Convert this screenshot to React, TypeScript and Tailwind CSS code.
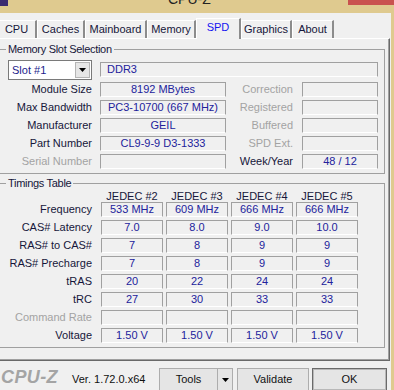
import React from 'react'

const memRows = [
  { label: 'Module Size', value: '8192 MBytes', right: 'Correction', rightValue: '', rightOff: true },
  { label: 'Max Bandwidth', value: 'PC3-10700 (667 MHz)', right: 'Registered', rightValue: '', rightOff: true },
  { label: 'Manufacturer', value: 'GEIL', right: 'Buffered', rightValue: '', rightOff: true },
  { label: 'Part Number', value: 'CL9-9-9 D3-1333', right: 'SPD Ext.', rightValue: '', rightOff: true },
  { label: 'Serial Number', value: '', off: true, right: 'Week/Year', rightValue: '48 / 12', rightOff: false },
]

const timings = [
  { label: 'Frequency', values: ['533 MHz', '609 MHz', '666 MHz', '666 MHz'] },
  { label: 'CAS# Latency', values: ['7.0', '8.0', '9.0', '10.0'] },
  { label: 'RAS# to CAS#', values: ['7', '8', '9', '9'] },
  { label: 'RAS# Precharge', values: ['7', '8', '9', '9'] },
  { label: 'tRAS', values: ['20', '22', '24', '24'] },
  { label: 'tRC', values: ['27', '30', '33', '33'] },
  { label: 'Command Rate', values: ['', '', '', ''], off: true },
  { label: 'Voltage', values: ['1.50 V', '1.50 V', '1.50 V', '1.50 V'] },
]

const tabs = [
  { name: 'CPU', w: 'w-[40px]' },
  { name: 'Caches', w: 'w-[48px]' },
  { name: 'Mainboard', w: 'w-[62px]' },
  { name: 'Memory', w: 'w-[49px]' },
  { name: 'SPD', w: 'w-[45px]', active: true },
  { name: 'Graphics', w: 'w-[51px]' },
  { name: 'About', w: 'w-[42px]' },
]

function Box({ children, className = '' }: { children?: React.ReactNode; className?: string }) {
  return (
    <div
      className={`h-[15px] border border-[#a0a0a0] border-b-white text-center leading-[13px] text-[#22229c] whitespace-nowrap overflow-hidden ${className}`}
    >
      {children}
    </div>
  )
}

function Arrow() {
  return (
    <svg width="7" height="4" viewBox="0 0 7 4">
      <polygon points="0,0 7,0 3.5,4" fill="#000" />
    </svg>
  )
}

export default function App() {
  return (
    <div className="w-[394px] h-[390px] overflow-hidden bg-[#dfca8f] flex flex-col font-['Liberation_Sans',Arial,sans-serif] text-[11px] text-[#16163a]">
      {/* title bar */}
      <div className="h-[13px] shrink-0 flex items-start">
        <div className="w-[8px] h-[6px] bg-[#3b2a70]" />
        <div className="ml-[160px] -mt-[8px] text-[14px] leading-[14px] text-[#222]">CPU-Z</div>
        <div className="ml-auto w-[46px] h-[5px] bg-[#c9524f]" />
      </div>

      <div className="flex-1 w-[391px] bg-[#f0f0f0] flex flex-col">
        {/* tabs */}
        <div className="h-[25px] shrink-0 flex items-end -ml-[3px]">
          {tabs.map((t) =>
            t.active ? (
              <div
                key={t.name}
                className={`${t.w} h-[21px] -mb-[1px] relative z-10 bg-[#f0f0f0] border-t border-l border-white border-r-2 border-r-[#8c8c8c] flex items-center justify-center pb-[3px] text-[#1414f0]`}
              >
                {t.name}
              </div>
            ) : (
              <div
                key={t.name}
                className={`${t.w} h-[18px] border-t border-l border-white border-r-2 border-r-[#8c8c8c] flex items-center justify-center text-[#16163a]`}
              >
                {t.name}
              </div>
            )
          )}
        </div>

        {/* panel */}
        <div className="w-[393px] -ml-[3px] h-[323px] shrink-0 border-t border-l border-white border-r border-b border-r-[#696969] border-b-[#696969] shadow-[inset_-1px_-1px_0_#a0a0a0] flex flex-col">
          <fieldset className="ml-[1px] mr-[4px] mt-[4px] border border-[#a0a0a0] pt-[4px] pb-[4px]">
            <legend className="ml-[6px] px-[2px] leading-[13px] tracking-[-0.3px]">Memory Slot Selection</legend>
            <div className="flex h-[20px]">
              <div className="ml-[8px] w-[84px] h-[20px] bg-white border border-[#7a7a7a] flex items-center">
                <span className="pl-[3px] flex-1 text-[#1c1c8c]">Slot #1</span>
                <div className="w-[15px] h-[16px] mr-[1px] bg-[#e6e6e6] border border-[#b5b5b5] flex items-center justify-center">
                  <Arrow />
                </div>
              </div>
              <Box className="ml-[8px] w-[278px] mt-[2px] !text-left pl-[6px]">DDR3</Box>
            </div>
            <div className="flex flex-col gap-[3px] mt-[2px]">
              {memRows.map((r) => (
                <div key={r.label} className="flex h-[15px] leading-[15px]">
                  <div className={`w-[92px] text-right ${r.off ? 'text-[#a3a3a3]' : ''}`}>{r.label}</div>
                  <Box className="ml-[8px] w-[126px]">{r.value}</Box>
                  <div className={`w-[67px] text-right ${r.rightOff ? 'text-[#a3a3a3]' : ''}`}>{r.right}</div>
                  <Box className="ml-[9px] w-[76px]">{r.rightValue}</Box>
                </div>
              ))}
            </div>
          </fieldset>

          <fieldset className="ml-[1px] mr-[4px] mt-[3px] border border-[#a0a0a0] pb-[4px]">
            <legend className="ml-[6px] px-[2px] leading-[13px] tracking-[-0.3px]">Timings Table</legend>
            <div className="flex h-[12px] leading-[12px]">
              <div className="w-[92px]" />
              <div className="ml-[9px] flex gap-[3px]">
                {['JEDEC #2', 'JEDEC #3', 'JEDEC #4', 'JEDEC #5'].map((h) => (
                  <div key={h} className="w-[62px] text-center">{h}</div>
                ))}
              </div>
            </div>
            <div className="flex flex-col gap-[3px]">
              {timings.map((r) => (
                <div key={r.label} className="flex h-[15px] leading-[15px]">
                  <div className={`w-[92px] text-right ${r.off ? 'text-[#a3a3a3]' : ''}`}>{r.label}</div>
                  <div className="ml-[9px] flex gap-[3px]">
                    {r.values.map((v, i) => (
                      <Box key={i} className="w-[62px]">{v}</Box>
                    ))}
                  </div>
                </div>
              ))}
            </div>
          </fieldset>
        </div>

        {/* bottom bar */}
        <div className="flex items-start">
          <div className="w-[72px] pl-[1px] mt-[7px] text-[18px] leading-[19px] font-bold italic text-[#a4a4a4] tracking-[0.4px]">CPU-Z</div>
          <div className="w-[87px] mt-[12px] leading-[13px] text-[#111]">Ver. 1.72.0.x64</div>
          <div className="mt-[7px] w-[74px] h-[23px] border border-[#adadad] bg-[#e5e5e5] flex text-[#111]">
            <div className="w-[57px] flex items-center justify-center">Tools</div>
            <div className="flex-1 border-l border-[#adadad] flex items-center justify-center">
              <Arrow />
            </div>
          </div>
          <div className="mt-[7px] ml-[4px] w-[72px] h-[23px] border border-[#adadad] bg-[#e5e5e5] flex items-center justify-center text-[#111]">
            Validate
          </div>
          <div className="mt-[7px] ml-[3px] w-[75px] h-[23px] border border-[#6a6a6a] shadow-[inset_0_0_0_1px_#b8b8b8] bg-[#e5e5e5] flex items-center justify-center text-[#111]">
            OK
          </div>
        </div>
      </div>
    </div>
  )
}
